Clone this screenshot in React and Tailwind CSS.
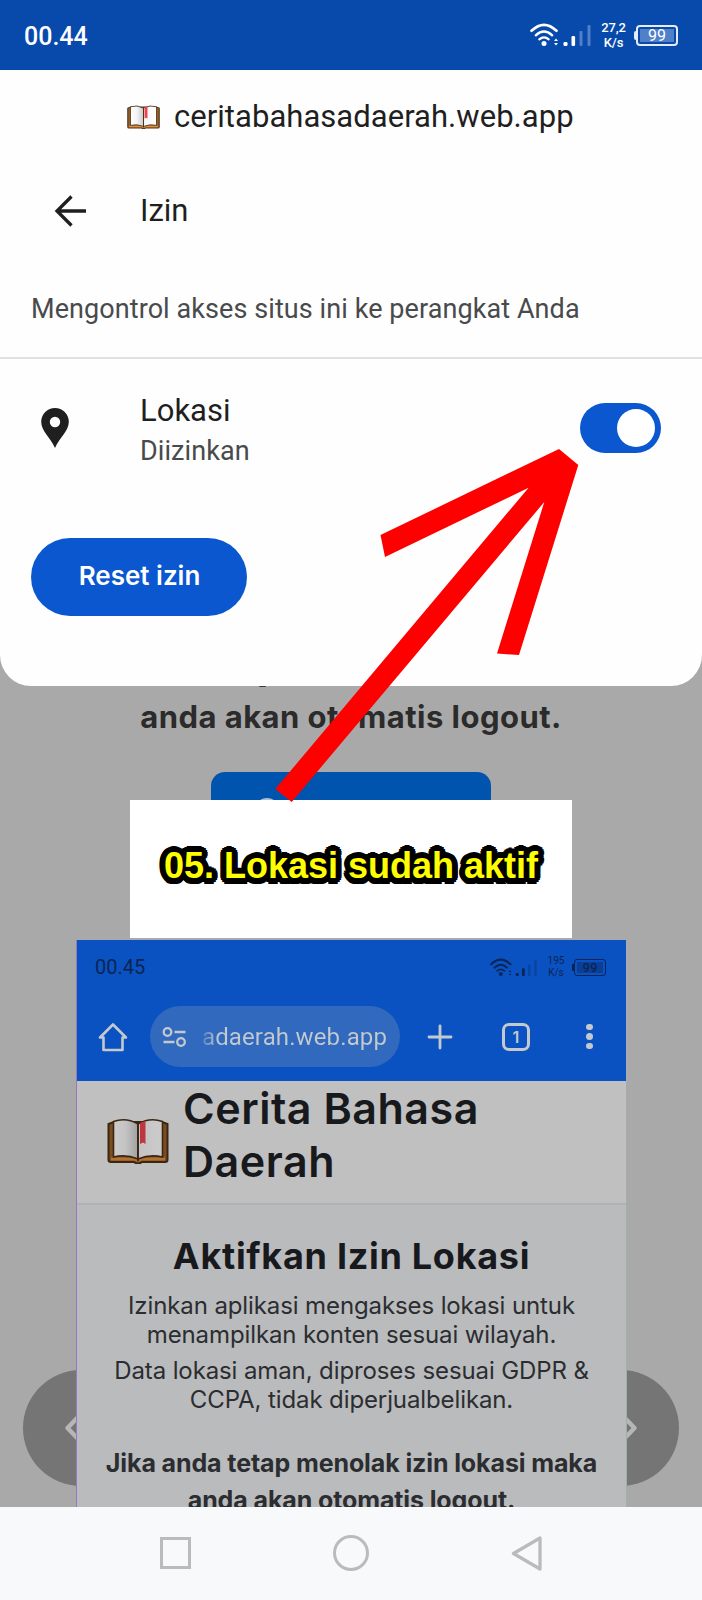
const roboto = "font-['Roboto',sans-serif]";
const inter = "font-['Inter',sans-serif]";

function Book({ className }) {
  return (
    <svg viewBox="0 0 62 46" className={className} preserveAspectRatio="none">
      <path d="M1.5 6 L7 4 H55 L60.5 6 V42 Q60.500 44 58 44 H35 Q31 47 27 44 H4 Q1.500 44 1.500 42 Z" fill="#9a6127" stroke="#4a3018" strokeWidth="2" />
      <path d="M4 39.500 H58 V42.500 H35 Q31 44.500 27 42.500 H4 Z" fill="#e0903a" />
      <path d="M6.500 3.500 Q19 -1 31 6 V41 Q19 36 6.500 39 Z" fill="url(#pageShade)" stroke="#4a3018" strokeWidth="1.6" />
      <path d="M55.500 3.500 Q43 -1 31 6 V41 Q43 36 55.500 39 Z" fill="url(#pageLight)" stroke="#4a3018" strokeWidth="1.6" />
      <path d="M33 5 L38.500 3 V26 L36 24.500 L33 26 Z" fill="#ee4450" />
      <path d="M31 5 V43" stroke="#4a3018" strokeWidth="1.8" />
      <defs>
        <linearGradient id="pageShade">
          <stop offset="0" stopColor="#ffffff" />
          <stop offset="0.5" stopColor="#f4f4f4" />
          <stop offset="1" stopColor="#c9c9c9" />
        </linearGradient>
        <linearGradient id="pageLight">
          <stop offset="0" stopColor="#f4f4f4" />
          <stop offset="1" stopColor="#ffffff" />
        </linearGradient>
      </defs>
    </svg>
  );
}

function Signal({ className }) {
  return (
    <svg viewBox="0 0 61 24" className={className} fill="none" stroke="currentColor">
      <path d="M1.500 7.800 Q14 -4.200 26.500 7.800" strokeWidth="2.600" strokeLinecap="round" />
      <path d="M5.800 12.300 Q14 4.800 22.200 12.300" strokeWidth="2.400" strokeLinecap="round" />
      <path d="M9.300 16.300 Q14 12.300 18.700 16.300" strokeWidth="2.200" strokeLinecap="round" />
      <g fill="currentColor" stroke="none">
        <circle cx="14" cy="20.500" r="2.500" />
        <path d="M24 18 L26 15.500 L28 18 Z M24 20 H28 L26 22.500 Z" />
        <rect x="33.500" y="19" width="4" height="4" rx="1.200" />
        <rect x="41.500" y="13" width="3.600" height="10" rx="1.200" />
        <rect x="49.500" y="8" width="3" height="15" rx="1" opacity=".3" />
        <rect x="57.500" y="2" width="3" height="21" rx="1" opacity=".3" />
      </g>
    </svg>
  );
}

function StatusBar() {
  return (
    <header className={`${roboto} flex h-[70px] items-center bg-[#084aac] pl-[24px] pr-[24px] text-white`}>
      <span className="pt-[3px] text-[25px] font-medium">00.44</span>
      <Signal className="ml-auto h-[24px] w-[61px]" />
      <div className="ml-[10px] w-[26px] text-center text-[13px] font-medium leading-[15px] tracking-[-0.2px]">
        <div>27,2</div>
        <div>K/s</div>
      </div>
      <div className="ml-[7px] flex items-center">
        <div className="h-[9px] w-[2.500px] rounded-l-sm bg-[#e5ecf7]" />
        <div className="h-[21px] w-[42px] rounded-[4px] border-2 border-[#e5ecf7] p-[2px]">
          <div className="flex h-full items-center justify-center bg-[#4f80c8] pt-px text-[16px] leading-none">99</div>
        </div>
      </div>
    </header>
  );
}

function PermissionSheet() {
  return (
    <section className={`${roboto} h-[616px] rounded-b-[31px] bg-[#fefefe] text-[#1f1f1f]`}>
      <div className="flex h-[94px] items-center pl-[127px]">
        <Book className="h-[24px] w-[33px]" />
        <span className="ml-[14px] text-[31px] tracking-[0.04px]">ceritabahasadaerah.web.app</span>
      </div>
      <div className="flex h-[96px] items-center pb-[2px] pl-[54px]">
        <svg viewBox="0 0 34 32" className="h-[32px] w-[34px]" fill="none" stroke="#1f1f1f" strokeWidth="3.300">
          <path d="M32 16 H3 M17.500 1.500 L3 16 L17.500 30.500" />
        </svg>
        <span className="ml-[52px] text-[31px]">Izin</span>
      </div>
      <div className="flex h-[99px] items-center border-b-2 border-[#e0e1e1] pl-[31px] pt-[2px]">
        <p className="text-[27px] tracking-[0.08px] text-[#484a4c]">Mengontrol akses situs ini ke perangkat Anda</p>
      </div>
      <div className="flex h-[138px] items-center pl-[41px] pr-[41px]">
        <svg viewBox="0 0 28 40" className="h-[40px] w-[28px]">
          <path fillRule="evenodd" fill="#1f1f1f" d="M14 0 A13.800 13.800 0 0 0 .2 13.800 C.2 23 9 29 14 40 C19 29 27.800 23 27.800 13.800 A13.800 13.800 0 0 0 14 0 Z M14 8.800 A5.200 5.200 0 1 1 14 19.200 A5.200 5.200 0 1 1 14 8.800 Z" />
        </svg>
        <div className="ml-[71px] mt-[6px] leading-[40px]">
          <div className="text-[31px]">Lokasi</div>
          <div className="text-[27px] tracking-[0.08px] text-[#484a4c]">Diizinkan</div>
        </div>
        <div className="ml-auto flex h-[50px] w-[81px] items-center justify-end rounded-full bg-[#0b57d0] pr-[6px]">
          <div className="size-[38px] rounded-full bg-white" />
        </div>
      </div>
      <button className={`${inter} ml-[31px] mt-[41px] flex h-[78px] w-[216px] items-center justify-center rounded-full bg-[#0b57d0] pb-[3px] pl-px text-[26px] font-semibold text-white`}>
        Reset izin
      </button>
    </section>
  );
}

function SideButton({ className, d }) {
  return (
    <div className={`absolute top-[1370px] flex size-[116px] items-center rounded-full bg-[#757575] ${className}`}>
      <svg viewBox="0 0 116 116" className="size-[116px]" fill="none" stroke="#b6b6b6" strokeWidth="4.500" strokeLinejoin="round">
        <path d={d} />
      </svg>
    </div>
  );
}

function NestedPhone() {
  return (
    <section className="absolute left-[76px] top-[940px] h-[567px] w-[551px] overflow-hidden border-x border-l-[#9878bd] border-r-[#a4adab] bg-[#babbbd]">
      <div className={`${roboto} h-[141px] bg-[#0a52c1]`}>
        <div className="flex h-[54px] items-center pl-[18px] pr-[20px] text-[#0a2554]">
          <span className="text-[20px]">00.45</span>
          <Signal className="ml-auto h-[19px] w-[47px]" />
          <div className="ml-[10px] w-[18px] text-center text-[10px] leading-[12px]">
            <div>195</div>
            <div>K/s</div>
          </div>
          <div className="ml-[7px] flex items-center">
            <div className="h-[7px] w-[2px] bg-[#0a2554]" />
            <div className="h-[17px] w-[32px] rounded-[3px] border-[1.500px] border-[#0a2554] p-[2px]">
              <div className="flex h-full items-center justify-center bg-[#0b3f97] text-[13px] font-medium leading-none">99</div>
            </div>
          </div>
        </div>
        <div className="flex h-[85px] items-center pl-[21px] text-[#c3c9cd]">
          <svg viewBox="0 0 30 30" className="h-[30px] w-[30px] shrink-0" fill="none" stroke="currentColor" strokeWidth="2.600" strokeLinejoin="round" strokeLinecap="round">
            <path d="M2 15.500 H5.500 V28 H24.500 V15.500 H28 L15 2.500 Z" />
          </svg>
          <div className="ml-[22px] flex h-[61px] w-[250px] shrink-0 items-center rounded-full bg-[#3069bd] pl-[12px]">
            <svg viewBox="0 0 25 20" className="h-[20px] w-[25px] shrink-0" fill="none" stroke="currentColor" strokeWidth="2.300">
              <circle cx="5.500" cy="5" r="3.800" />
              <path d="M12.500 5 H23.500 M1.500 15 H12.500" />
              <circle cx="19" cy="15" r="3.800" />
            </svg>
            <span className="ml-[15px] bg-linear-to-r from-[#5580c0] via-[#c3c9cd] via-9% to-[#c3c9cd] bg-clip-text text-[24px] tracking-[0.12px] text-transparent">adaerah.web.app</span>
          </div>
          <svg viewBox="0 0 26 26" className="ml-[27px] size-[26px] shrink-0" fill="none" stroke="currentColor" strokeWidth="2.800" strokeLinecap="round">
            <path d="M13 2 V24 M2 13 H24" />
          </svg>
          <div className={`${inter} ml-[49px] flex size-[28px] shrink-0 items-center justify-center rounded-[7px] border-[3px] border-current text-[16px] font-semibold leading-none`}>1</div>
          <div className="ml-[56px] flex flex-col gap-[3px]">
            <i className="size-[6.500px] rounded-full bg-current" />
            <i className="size-[6.500px] rounded-full bg-current" />
            <i className="size-[6.500px] rounded-full bg-current" />
          </div>
        </div>
      </div>
      <div className="flex h-[124px] border-b-2 border-[#afb2b7] bg-[#c0c0c0] pl-[30px]">
        <Book className="mt-[37px] h-[46px] w-[62px] brightness-[.8]" />
        <h1 className={`${inter} ml-[14px] mt-px text-[43px] font-semibold leading-[53px] tracking-[0.52px] text-[#17191d]`}>
          Cerita Bahasa
          <br />
          Daerah
        </h1>
      </div>
      <div className={`${inter} text-center text-[24px] leading-[29px] tracking-[-0.11px] text-[#2b2d30]`}>
        <h2 className="pt-[29px] text-[36px] font-bold leading-[44px] tracking-[0.7px] text-[#17191d]">Aktifkan Izin Lokasi</h2>
        <p className="pt-[13px]">
          Izinkan aplikasi mengakses lokasi untuk
          <br />
          menampilkan konten sesuai wilayah.
        </p>
        <p className="pt-[7px]">
          Data lokasi aman, diproses sesuai GDPR &amp;
          <br />
          CCPA, tidak diperjualbelikan.
        </p>
        <p className="pt-[31px] text-[25px] font-bold leading-[37px]">
          Jika anda tetap menolak izin lokasi maka
          <br />
          anda akan otomatis logout.
        </p>
      </div>
    </section>
  );
}

export default function App() {
  return (
    <main className="relative flex h-[1600px] w-[702px] flex-col overflow-hidden bg-[#a9a9a9]">
      <StatusBar />
      <PermissionSheet />
      <div className="flex grow flex-col items-center">
        <div className="mr-[178px] h-px w-[7px] rounded-b-full bg-[#3a3a3a]" />
        <p className={`${inter} mt-[12px] text-[31px] font-bold leading-[36px] tracking-[0.46px] text-[#2b2b2b]`}>anda akan otomatis logout.</p>
        <div className="mt-[37px] h-[60px] w-[280px] overflow-hidden rounded-[14px] bg-[#0054ae] pl-[43px] pt-[26px]">
          <div className="size-[26px] rounded-full bg-[#a9bdd4]" />
        </div>
      </div>
      <nav className="flex h-[93px] items-center bg-[#f7f9fb] pb-px pl-[160px]">
        <div className="h-[32px] w-[31px] border-[3.500px] border-[#b9bbbc]" />
        <div className="ml-[142px] size-[36px] rounded-full border-[3.500px] border-[#b9bbbc]" />
        <svg viewBox="0 0 31 35" className="ml-[142px] h-[35px] w-[31px]" fill="none" stroke="#b9bbbc" strokeWidth="3.300" strokeLinejoin="round">
          <path d="M29 2 V33 L2.500 17.500 Z" />
        </svg>
      </nav>

      <SideButton className="left-[23px]" d="M58 44 L44.500 58 L58 72" />
      <SideButton className="left-[563px]" d="M58 44 L71.500 58 L58 72" />
      <div className="absolute left-[130px] top-[800px] flex h-[138px] w-[442px] items-center justify-center bg-white pb-[6px]">
        <span className="font-['Liberation_Sans',sans-serif] text-[36px] font-bold text-[#ffff00] [text-shadow:6px_0_#000,5.500px_2.300px_#000,4.200px_4.200px_#000,2.300px_5.500px_#000,0_6px_#000,-2.300px_5.500px_#000,-4.200px_4.200px_#000,-5.500px_2.300px_#000,-6px_0_#000,-5.500px_-2.300px_#000,-4.200px_-4.200px_#000,-2.300px_-5.500px_#000,0_-6px_#000,2.300px_-5.500px_#000,4.200px_-4.200px_#000,5.500px_-2.300px_#000,3px_0_#000,-3px_0_#000,0_3px_#000,0_-3px_#000]">
          05. Lokasi sudah aktif
        </span>
      </div>
      <NestedPhone />
      <svg viewBox="0 0 702 1600" className="pointer-events-none absolute left-0 top-0 h-[1600px] w-[702px]">
        <polygon fill="#ff0000" points="559,449 578.300,465 519,655 497,653.500 544.300,502 291.700,802 275.300,789 528.600,487.700 385,557 380.500,535" />
      </svg>
    </main>
  );
}
